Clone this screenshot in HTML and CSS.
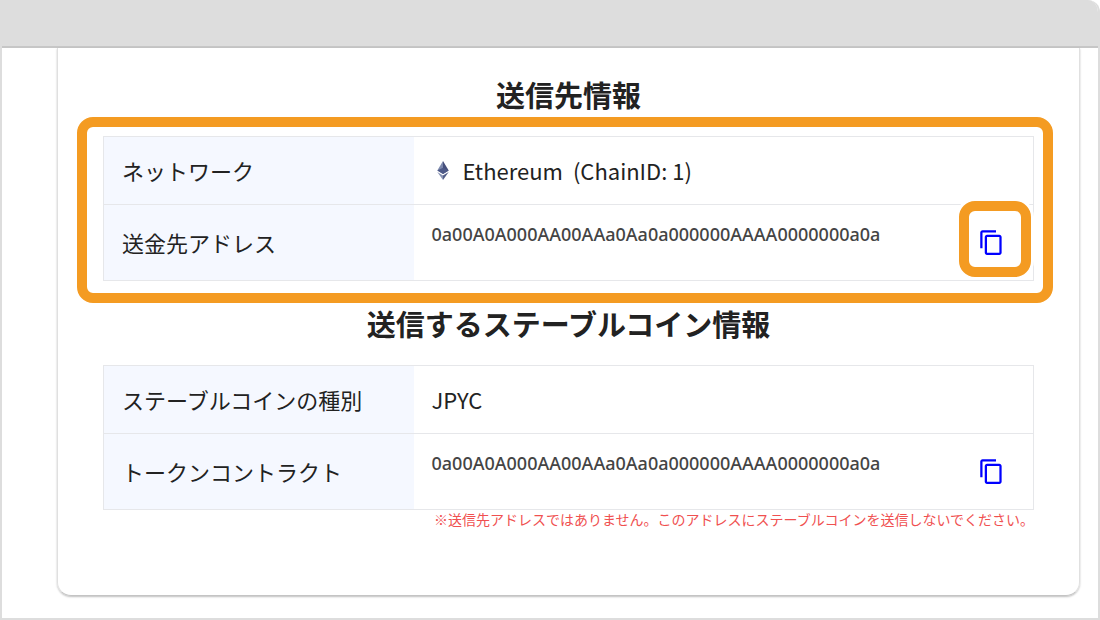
FILE: index.html
```html
<!DOCTYPE html>
<html lang="ja">
<head>
<meta charset="utf-8">
<meta name="viewport" content="width=device-width, initial-scale=1">
<title>送信先情報</title>
<link rel="stylesheet" href="styles.css">
</head>
<body>
<div class="window">
  <header class="titlebar"></header>
  <main class="viewport">
    <div class="card">
      <section>
        <h2 class="heading">送信先情報</h2>
        <div class="table-wrap highlighted">
          <table class="info">
            <tr>
              <th scope="row">ネットワーク</th>
              <td>
                <div class="network">
                  <svg class="eth" viewBox="0 0 12 20" aria-hidden="true">
                    <path fill="#7d89ad" d="M6 0 0 10l6 3.600z"/>
                    <path fill="#454f7c" d="m6 0 6 10-6 3.600z"/>
                    <path fill="#4d5988" d="m0 10 6-2.800 6 2.800-6 3.600z"/>
                    <path fill="#8792b3" d="m0 11.600 6 3.600V20z"/>
                    <path fill="#535e88" d="m12 11.600-6 3.600V20z"/>
                  </svg>
                  <span>Ethereum</span>
                  <span>(ChainID: 1)</span>
                </div>
              </td>
            </tr>
            <tr>
              <th scope="row">送金先アドレス</th>
              <td>
                <div class="copy-row">
                  <span class="address">0a00A0A000AA00AAa0Aa0a000000AAAA0000000a0a</span>
                  <button class="copy marked" type="button" aria-label="送金先アドレスをコピー">
                    <svg class="copy-icon" viewBox="0 0 24 24" aria-hidden="true"><path d="M16 1H4c-1.100 0-2 .9-2 2v14h2V3h12V1zm3 4H8c-1.100 0-2 .9-2 2v14c0 1.100.9 2 2 2h11c1.100 0 2-.9 2-2V7c0-1.100-.9-2-2-2zm0 16H8V7h11v14z"/></svg>
                  </button>
                </div>
              </td>
            </tr>
          </table>
        </div>
      </section>
      <section>
        <h2 class="heading second">送信するステーブルコイン情報</h2>
        <div class="table-wrap">
          <table class="info">
            <tr>
              <th scope="row">ステーブルコインの種別</th>
              <td>JPYC</td>
            </tr>
            <tr>
              <th scope="row">トークンコントラクト</th>
              <td>
                <div class="copy-row">
                  <span class="address">0a00A0A000AA00AAa0Aa0a000000AAAA0000000a0a</span>
                  <button class="copy" type="button" aria-label="トークンコントラクトをコピー">
                    <svg class="copy-icon" viewBox="0 0 24 24" aria-hidden="true"><path d="M16 1H4c-1.100 0-2 .9-2 2v14h2V3h12V1zm3 4H8c-1.100 0-2 .9-2 2v14c0 1.100.9 2 2 2h11c1.100 0 2-.9 2-2V7c0-1.100-.9-2-2-2zm0 16H8V7h11v14z"/></svg>
                  </button>
                </div>
              </td>
            </tr>
          </table>
        </div>
        <p class="note">※送信先アドレスではありません。このアドレスにステーブルコインを送信しないでください。</p>
      </section>
    </div>
  </main>
</div>
</body>
</html>
```

FILE: styles.css
```css
* {
  box-sizing: border-box;
}

body {
  margin: 0;
  background: #fff;
  color: #222;
  font-family: "Noto Sans CJK JP", sans-serif;
}

.window {
  display: flex;
  flex-direction: column;
  min-height: 100vh;
  border: 2px solid #ddd;
  border-top: 0;
  border-top-right-radius: 12px;
  overflow: hidden;
}

.titlebar {
  height: 48px;
  background: #ddd;
  border-bottom: 2px solid #c6c6c6;
}

.viewport {
  flex: 1;
  padding: 0 18px 22px 55px;
}

.card {
  padding: 25px 45px 67px;
  border: 1px solid #e0e0e0;
  border-top: 0;
  border-bottom-color: #c4c4c4;
  border-radius: 0 0 14px 14px;
  box-shadow: 0 1px 2px rgba(0, 0, 0, 0.25);
}

.heading {
  margin: 0 0 21px;
  font-size: 29px;
  line-height: 42px;
  font-weight: 700;
  text-align: center;
}

.second {
  margin-top: 21px;
}

.table-wrap {
  position: relative;
}

.highlighted::after {
  content: "";
  position: absolute;
  inset: -19px -19px -22px -26px;
  border: 10px solid #f49b22;
  border-radius: 16px;
  pointer-events: none;
}

.info {
  width: 100%;
  table-layout: fixed;
  border-collapse: collapse;
  border: 1px solid #e6e7ea;
  font-size: 22px;
  line-height: 32px;
}

.info tr {
  border-bottom: 1px solid #e6e7ea;
}

.info th,
.info td {
  padding: 17px 18px 18px;
  font-weight: 400;
  text-align: left;
}

.info th {
  width: 310px;
  background: #f5f8ff;
}

.network {
  display: flex;
  align-items: center;
  gap: 10px;
}

.eth {
  width: 12px;
  height: 19px;
  margin: 0 4px 0 5px;
}

.copy-row {
  display: flex;
  justify-content: space-between;
  align-items: flex-start;
  height: 40px;
  padding-right: 6px;
}

.address {
  font-family: "Noto Sans", "Noto Sans CJK JP", sans-serif;
  font-size: 18px;
  font-weight: 500;
  line-height: 24px;
  color: #444;
}

.copy {
  position: relative;
  display: flex;
  align-items: center;
  justify-content: center;
  width: 36px;
  height: 40px;
  padding: 0;
  border: 0;
  background: none;
  cursor: pointer;
}

.copy-icon {
  position: relative;
  z-index: 1;
  width: 27px;
  height: 27px;
  fill: #00f;
}

.marked::before {
  content: "";
  position: absolute;
  inset: -21px -22px -15px -14px;
  border: 10px solid #f49b22;
  border-radius: 16px;
  background: #fff;
  box-shadow: 0 0 0 3px #fff;
}

.note {
  margin: 0;
  font-size: 14px;
  line-height: 18px;
  color: #f05050;
  text-align: right;
}
```
